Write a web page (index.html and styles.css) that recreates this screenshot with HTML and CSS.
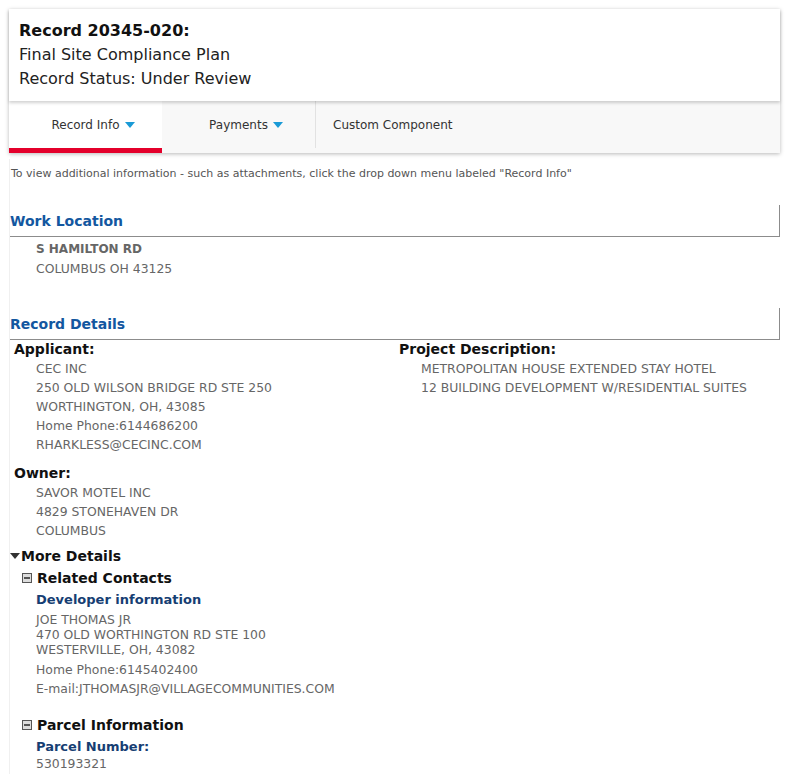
FILE: index.html
```html
<!DOCTYPE html>
<html>
<head>
<meta charset="utf-8">
<link rel="stylesheet" href="styles.css">
</head>
<body>
<div class="page">
  <div class="card">
    <div class="card-head">
      <div class="rec-title">Record 20345-020:</div>
      <div class="rec-line">Final Site Compliance Plan</div>
      <div class="rec-line">Record Status: Under Review</div>
    </div>
    <div class="tabs">
      <div class="tab tab-active">Record Info <span class="caret"></span></div>
      <div class="tab">Payments <span class="caret"></span></div>
      <div class="tab tab-last">Custom Component</div>
    </div>
  </div>

  <div class="content">
    <div class="info">To view additional information - such as attachments, click the drop down menu labeled "Record Info"</div>

    <div class="sec-head sec-work">Work Location</div>
    <div class="addr">
      <div class="addr-strong">S HAMILTON RD</div>
      <div class="addr-line">COLUMBUS OH 43125</div>
    </div>

    <div class="sec-head sec-details">Record Details</div>
    <div class="details">
      <div class="col">
        <div class="label">Applicant:</div>
        <div class="vals">
          <div>CEC INC</div>
          <div>250 OLD WILSON BRIDGE RD STE 250</div>
          <div>WORTHINGTON, OH, 43085</div>
          <div>Home Phone:6144686200</div>
          <div>RHARKLESS@CECINC.COM</div>
        </div>
        <div class="label label-owner">Owner:</div>
        <div class="vals">
          <div>SAVOR MOTEL INC</div>
          <div>4829 STONEHAVEN DR</div>
          <div>COLUMBUS</div>
        </div>
      </div>
      <div class="col">
        <div class="label">Project Description:</div>
        <div class="vals">
          <div>METROPOLITAN HOUSE EXTENDED STAY HOTEL</div>
          <div>12 BUILDING DEVELOPMENT W/RESIDENTIAL SUITES</div>
        </div>
      </div>
    </div>

    <div class="more"><span class="tri"></span>More Details</div>
    <div class="sub">
      <div class="sub-head sub-contacts"><span class="box-icon"></span>Related Contacts</div>
      <div class="sub-body">
        <div class="navy">Developer information</div>
        <div class="tight">
          <div>JOE THOMAS JR</div>
          <div>470 OLD WORTHINGTON RD STE 100</div>
          <div>WESTERVILLE, OH, 43082</div>
        </div>
        <div class="loose">
          <div>Home Phone:6145402400</div>
          <div>E-mail:JTHOMASJR@VILLAGECOMMUNITIES.COM</div>
        </div>
      </div>
      <div class="sub-head sub-parcel"><span class="box-icon"></span>Parcel Information</div>
      <div class="sub-body">
        <div class="navy">Parcel Number:</div>
        <div class="tight tight-parcel"><div>530193321</div></div>
      </div>
    </div>
  </div>
</div>
</body>
</html>
```

FILE: styles.css
```css
html, body {
  margin: 0;
  padding: 0;
  background: #ffffff;
}
body {
  font-family: "DejaVu Sans", Verdana, sans-serif;
  color: #222;
}
.page {
  padding: 9px 13px 0 9px;
}
.card {
  background: #f8f8f8;
  box-shadow: 0 1px 4px rgba(0,0,0,0.28);
}
.card-head {
  background: #fff;
  height: 92px;
  box-sizing: border-box;
  padding: 10px 10px 0 10px;
  position: relative;
  z-index: 1;
  box-shadow: 0 2px 3px rgba(0,0,0,0.18);
}
.rec-title {
  font-size: 16px;
  font-weight: bold;
  line-height: 24px;
  color: #111;
}
.rec-line {
  font-size: 16px;
  line-height: 24px;
  color: #222;
}
.tabs {
  display: flex;
  height: 52px;
}
.tab {
  box-sizing: border-box;
  width: 154px;
  display: flex;
  align-items: center;
  justify-content: center;
  padding-left: 15px;
  font-size: 12px;
  color: #333;
  border-right: 1px solid #e2e2e2;
  margin: 0 0 5px 0;
}
.tab-active {
  width: 153px;
  background: #fff;
  margin-bottom: 0;
  border-bottom: 5px solid #e4002b;
  border-right: none;
}
.tab-last {
  border-right: none;
  justify-content: flex-start;
  padding-left: 17px;
  flex: 1;
}
.caret {
  display: inline-block;
  width: 0;
  height: 0;
  border-left: 5px solid transparent;
  border-right: 5px solid transparent;
  border-top: 6px solid #1a9ad6;
  margin-left: 5px;
}
.content {
  border-left: 1px solid #f0f0f0;
  margin-top: 6px;
  min-height: 620px;
}
.info {
  font-size: 11px;
  color: #555;
  line-height: 16px;
  padding: 7px 0 0 1px;
}
.sec-head {
  font-size: 14px;
  font-weight: bold;
  color: #1357a0;
  height: 32px;
  box-sizing: border-box;
  padding: 8px 0 0 0;
  border-right: 1px solid #8c8c8c;
  border-bottom: 1px solid #8c8c8c;
}
.sec-work {
  margin-top: 23px;
}
.sec-details {
  margin-top: 29px;
}
.addr {
  padding: 2px 0 0 26px;
  font-size: 12.4px;
  line-height: 20px;
  color: #666;
}
.addr-strong {
  font-weight: bold;
  font-size: 12px;
}
.details {
  display: flex;
  margin-top: -1px;
}
.col {
  width: 384px;
  padding-left: 4px;
}
.label {
  font-size: 14px;
  font-weight: bold;
  color: #111;
  line-height: 20px;
}
.label-owner {
  margin-top: 9px;
}
.vals {
  padding-left: 22px;
  font-size: 12.4px;
  line-height: 19px;
  color: #666;
}
.more {
  font-size: 14px;
  font-weight: bold;
  color: #111;
  line-height: 20px;
  margin-top: 6px;
  display: flex;
  align-items: center;
}
.tri {
  width: 0;
  height: 0;
  border-left: 5px solid transparent;
  border-right: 5px solid transparent;
  border-top: 6px solid #333;
  margin: 0 1px 0 0;
}
.sub {
  padding-left: 12px;
}
.sub-head {
  font-size: 14px;
  font-weight: bold;
  color: #111;
  line-height: 22px;
  display: flex;
  align-items: center;
}
.sub-contacts {
  margin-top: 1px;
}
.sub-parcel {
  margin-top: 16px;
}
.box-icon {
  box-sizing: border-box;
  width: 10px;
  height: 10px;
  border: 1px solid #555;
  background: #ddd linear-gradient(#555, #555) center / 6px 2px no-repeat;
  margin-right: 5px;
}
.sub-body {
  padding-left: 14px;
}
.navy {
  font-size: 13px;
  font-weight: bold;
  color: #163e73;
  line-height: 20px;
  margin-top: 1px;
}
.tight {
  font-size: 12.4px;
  line-height: 15px;
  color: #666;
  margin-top: 2px;
}
.tight-parcel {
  margin-top: -1px;
}
.loose {
  font-size: 12.4px;
  line-height: 19px;
  color: #666;
  margin-top: 3px;
}
```
